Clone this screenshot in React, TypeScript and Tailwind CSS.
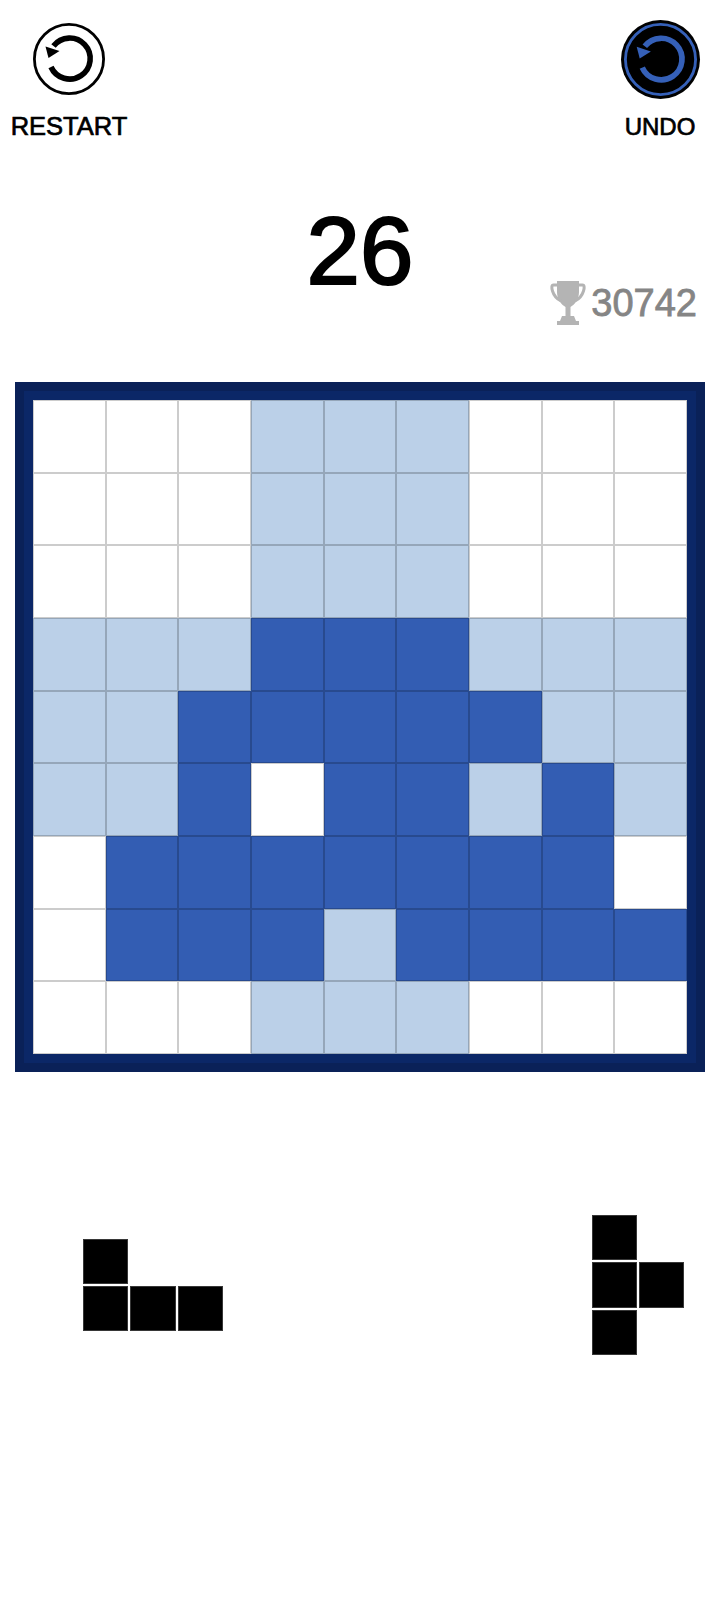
import React from "react";

const board = [
  "wwwlllwww",
  "wwwlllwww",
  "wwwlllwww",
  "llldddlll",
  "lldddddll",
  "lldwddldl",
  "wdddddddw",
  "wdddldddd",
  "wwwlllwww",
];

const ReplayIcon = ({ ring, arrow, fill, size }: { ring: string; arrow: string; fill: string; size: string }) => (
  <svg viewBox="0 0 72 72" className={size}>
    <circle cx="36" cy="36" r="34.6" fill={fill} stroke={ring} strokeWidth="2.8" />
    <path d="M18 44 A20.5 20.5 0 1 0 20.5 23" fill="none" stroke={arrow} strokeWidth="5.6" />
    <path d="M12.5 23.5 L15.5 35 L26.5 28 Z" fill={arrow} />
  </svg>
);

const Trophy = () => (
  <svg viewBox="0 0 36 46" className="w-9 h-[46px]">
    <path d="M7 1 H29 V12 C29 20 24 25 20.5 27 V36 H15.5 V27 C12 25 7 20 7 12 Z" fill="#b4b4b4" />
    <path d="M7 5 H3.5 C1.5 5 1.5 8 2.5 11 C4 16 7 19 11 21 M29 5 H32.5 C34.5 5 34.5 8 33.5 11 C32 16 29 19 25 21" fill="none" stroke="#b4b4b4" strokeWidth="3" />
    <path d="M12 36 H24 L26 41 L29 41 V45 H7 V41 L10 41 Z" fill="#b4b4b4" />
  </svg>
);

const Block = () => <div className="bg-black border border-[#8a8a8a]/40" />;

const App = () => {
  return (
    <div className="w-[720px] h-[1600px] bg-white text-black font-['Liberation_Sans',sans-serif]">
      <div className="flex justify-between pt-5">
        <div className="w-[138px] flex flex-col items-center pt-[3px]">
          <ReplayIcon ring="#000000" arrow="#000000" fill="#ffffff" size="w-[72px] h-[72px]" />
          <div className="mt-[17px] text-[25.5px] leading-7 [-webkit-text-stroke:0.7px_#000]">RESTART</div>
        </div>
        <div className="w-[120px] flex flex-col items-center">
          <div className="w-[79px] h-[79px] rounded-full bg-black p-[3px]">
            <ReplayIcon ring="#3560b8" arrow="#3560b8" fill="#000000" size="w-[73px] h-[73px]" />
          </div>
          <div className="mt-[14px] text-2xl leading-7 [-webkit-text-stroke:0.7px_#000]">UNDO</div>
        </div>
      </div>

      <div className="grid grid-cols-[1fr_auto_1fr] items-end mt-[62px]">
        <div />
        <div className="text-[96px] leading-[96px] font-normal [-webkit-text-stroke:2.2px_#000]">26</div>
        <div className="flex justify-end items-center gap-[5px] pr-[23px] -mb-[27px]">
          <Trophy />
          <span className="text-[38px] leading-[46px] text-[#858585] [-webkit-text-stroke:0.8px_#858585]">30742</span>
        </div>
      </div>

      <div className="mt-[83px] mx-[15px] border-[9px] border-[#0a2158]">
        <div className="border-[9px] border-[#0b2767] grid grid-cols-9 bg-white">
          {board.flatMap((row, r) =>
            row.split("").map((c, i) => (
              <div
                key={r + "-" + i}
                className={
                  "h-[72.67px] border border-black/20 " +
                  (c === "d" ? "bg-[#335db3]" : c === "l" ? "bg-[#bbd0e8]" : "bg-white")
                }
              />
            ))
          )}
        </div>
      </div>

      <div className="flex justify-between items-center pl-[83px] pr-[36px] mt-[143px]">
        <div className="grid grid-cols-[repeat(3,45.3px)] grid-rows-[repeat(2,45.3px)] gap-[2px]">
          <Block />
          <div />
          <div />
          <Block />
          <Block />
          <Block />
        </div>
        <div className="grid grid-cols-[repeat(2,45px)] grid-rows-[repeat(3,45.3px)] gap-[2px]">
          <Block />
          <div />
          <Block />
          <Block />
          <Block />
          <div />
        </div>
      </div>
    </div>
  );
};

export default App;
